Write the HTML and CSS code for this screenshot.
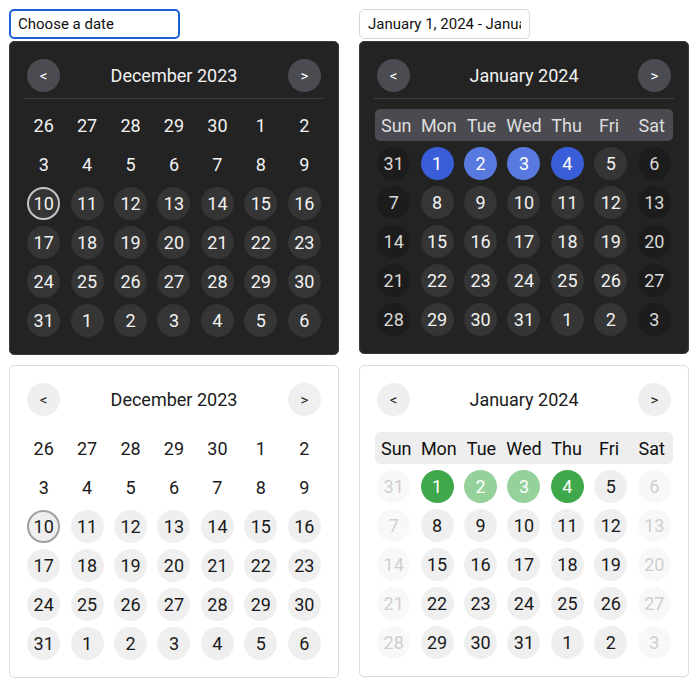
FILE: index.html
```html
<!DOCTYPE html>
<html lang="en">
<head>
    <meta charset="UTF-8">
    <meta name="viewport" content="width=device-width, initial-scale=1.0">
    <title>Date pickers</title>
    <link rel="stylesheet" href="styles.css">
</head>
<body>
    <div class="pickers">
        <div class="picker">
            <input type="text" class="date-input focused" placeholder="Choose a date">
            <div class="calendar dark" data-year="2023" data-month="11" data-mode="single"></div>
        </div>
        <div class="picker">
            <input type="text" class="date-input" value="January 1, 2024 - January 4, 2024">
            <div class="calendar dark" data-year="2024" data-month="0" data-mode="range"></div>
        </div>
        <div class="picker">
            <div class="calendar light" data-year="2023" data-month="11" data-mode="single"></div>
        </div>
        <div class="picker">
            <div class="calendar light" data-year="2024" data-month="0" data-mode="range"></div>
        </div>
    </div>

    <script>
        document.addEventListener('DOMContentLoaded', function () {
            const monthNames = ['January', 'February', 'March', 'April', 'May', 'June',
                'July', 'August', 'September', 'October', 'November', 'December'];
            const weekDays = ['Sun', 'Mon', 'Tue', 'Wed', 'Thu', 'Fri', 'Sat'];

            function buildCalendar(cal) {
                const year = +cal.dataset.year;
                const month = +cal.dataset.month;
                const mode = cal.dataset.mode;

                let html = '<div class="cal-header">' +
                    '<button class="nav-btn">&lt;</button>' +
                    '<span class="cal-title">' + monthNames[month] + ' ' + year + '</span>' +
                    '<button class="nav-btn">&gt;</button>' +
                    '</div><div class="divider"></div>';

                if (mode === 'range') {
                    html += '<div class="weekdays">';
                    weekDays.forEach(function (d) {
                        html += '<span>' + d + '</span>';
                    });
                    html += '</div>';
                }

                const first = new Date(year, month, 1);
                const start = new Date(year, month, 1 - first.getDay());
                const last = new Date(year, month + 1, 0);
                const totalDays = first.getDay() + last.getDate();
                const cells = Math.ceil(totalDays / 7) * 7 + (mode === 'single' && totalDays <= 35 ? 7 : 0);

                html += '<div class="days">';
                for (let i = 0; i < cells; i++) {
                    const d = new Date(start.getFullYear(), start.getMonth(), start.getDate() + i);
                    const day = d.getDate();
                    const dow = d.getDay();
                    let cls = 'day';

                    if (mode === 'single') {
                        if (d < new Date(2023, 11, 10)) {
                            cls += ' past';
                        } else if (d.getTime() === new Date(2023, 11, 10).getTime()) {
                            cls += ' today';
                        }
                    } else {
                        if (dow === 0 || dow === 6) {
                            cls += ' weekend';
                        }
                        if (d.getMonth() === 0 && d.getFullYear() === 2024) {
                            if (day === 1 || day === 4) cls += ' selected';
                            if (day === 2 || day === 3) cls += ' in-range';
                        }
                    }
                    html += '<span class="' + cls + '">' + day + '</span>';
                }
                html += '</div>';

                cal.innerHTML = html;
            }

            document.querySelectorAll('.calendar').forEach(buildCalendar);
        });
    </script>
</body>
</html>
```

FILE: styles.css
```css
* {
    margin: 0;
    padding: 0;
    box-sizing: border-box;
}

body {
    font-family: Roboto, "Liberation Sans", sans-serif;
    background-color: #ffffff;
    color: #222;
    padding: 9px;
}

.pickers {
    display: grid;
    grid-template-columns: 330px 330px;
    column-gap: 20px;
    row-gap: 10px;
}

.picker {
    display: flex;
    flex-direction: column;
    gap: 2px;
}

.date-input {
    width: 171px;
    height: 30px;
    padding: 0 8px;
    font-family: inherit;
    font-size: 15px;
    color: #111;
    border: 1px solid #d8d8d8;
    border-radius: 5px;
    background-color: #fff;
    outline: none;
}

.date-input::placeholder {
    color: #111;
}

.date-input.focused {
    border: 2px solid #1a5fd6;
    padding: 0 7px;
}

.calendar {
    width: 330px;
    border-radius: 5px;
    padding: 17px 12px;
}

.calendar.dark {
    background-color: #232323;
    border: 1px solid #3a3a3a;
    color: #f2f2f2;
}

.calendar.light {
    background-color: #fff;
    border: 1px solid #dcdcdc;
    color: #1a1a1a;
}

.cal-header {
    display: flex;
    align-items: center;
    justify-content: space-between;
    padding: 0 5px;
}

.nav-btn {
    width: 33px;
    height: 33px;
    border-radius: 50%;
    border: none;
    font-family: inherit;
    font-size: 15px;
    cursor: pointer;
}

.dark .nav-btn {
    background-color: #4b4b52;
    color: #fff;
}

.light .nav-btn {
    background-color: #efefef;
    color: #222;
}

.cal-title {
    font-size: 18px;
}

.divider {
    height: 1px;
    margin: 6px 2px 10px;
}

.dark .divider {
    background-color: #3d3d3d;
}

.light .divider {
    background-color: transparent;
    margin-bottom: 9px;
}

.weekdays {
    display: grid;
    grid-template-columns: repeat(7, 1fr);
    height: 32px;
    align-items: center;
    border-radius: 5px;
    margin: 0 3px 6px;
    font-size: 18px;
    text-align: center;
}

.dark .weekdays {
    background-color: #4a4a50;
    color: #dedede;
}

.light .weekdays {
    background-color: #eeeeee;
    color: #111;
}

.days {
    display: grid;
    grid-template-columns: repeat(7, 1fr);
    row-gap: 6px;
    justify-items: center;
}

.day {
    width: 33px;
    height: 33px;
    border-radius: 50%;
    display: flex;
    align-items: center;
    justify-content: center;
    font-size: 18px;
}

.dark .day {
    background-color: #353535;
}

.light .day {
    background-color: #efefef;
}

.dark .day.past,
.light .day.past {
    background-color: transparent;
}

.dark .day.today {
    border: 2px solid #c4c4c4;
}

.light .day.today {
    border: 2px solid #a0a0a0;
}

.dark .day.weekend {
    background-color: #1c1c1c;
    color: #d8d8d8;
}

.light .day.weekend {
    background-color: #f8f8f8;
    color: #cfcfcf;
}

.dark .day.selected {
    background-color: #3a5ed8;
    color: #fff;
}

.dark .day.in-range {
    background-color: #5779e0;
    color: #fff;
}

.light .day.selected {
    background-color: #3ea84b;
    color: #fff;
}

.light .day.in-range {
    background-color: #95d29b;
    color: #fff;
}
```
